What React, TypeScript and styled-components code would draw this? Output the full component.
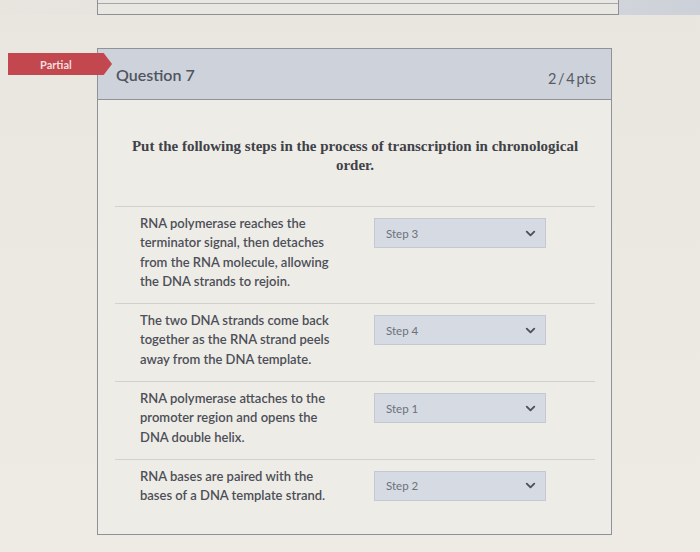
import React from 'react';
import styled, { createGlobalStyle } from 'styled-components';
import { ChevronDown } from 'lucide-react';

const GlobalStyle = createGlobalStyle`
    body {
        margin: 0;
        background-color: #ebe8e1;
        font-family: Lato, "Noto Sans", sans-serif;
    }
`;

const Page = styled.div`
    width: 700px;
    height: 552px;
    overflow: hidden;
    display: flex;
    flex-direction: column;
    background: linear-gradient(180deg, #e9e6e0 0%, #eeebe4 100%);
`;

const TopBand = styled.div`
    display: flex;
    height: 15px;
    background: linear-gradient(90deg, #e8e5df 0%, #e3e2e0 45%, #ccd0d8 100%);
`;

const PrevCard = styled.div`
    margin-left: 97px;
    width: 520px;
    border: 1px solid #8e9096;
    border-top: none;
    background-color: #e9e7e2;
    display: flex;
    flex-direction: column;
`;

const PrevFooter = styled.div`
    height: 3px;
    border-bottom: 1px solid #a4a6ab;
`;

const QuestionArea = styled.div`
    margin-top: 33px;
    margin-left: 97px;
    width: 515px;
    position: relative;
`;

const Badge = styled.div`
    position: absolute;
    left: -89px;
    top: 5px;
    width: 104px;
    height: 22px;
    background-color: #c2474e;
    clip-path: polygon(0 0, 92% 0, 100% 50%, 92% 100%, 0 100%);
    color: #f4dede;
    font-size: 11px;
    font-weight: 700;
    display: flex;
    align-items: center;
    padding-left: 32px;
    box-sizing: border-box;
    z-index: 2;
`;

const Card = styled.div`
    border: 1px solid #8f9297;
    background-color: #eeece7;
`;

const Header = styled.div`
    height: 50px;
    background-color: #cdd2db;
    border-bottom: 1px solid #8f9297;
    display: flex;
    align-items: center;
    justify-content: space-between;
    padding: 0 15px 0 18px;
`;

const Title = styled.div`
    font-size: 16px;
    color: #505560;
    font-weight: 600;
`;

const Points = styled.div`
    font-size: 14.5px;
    color: #555a64;
    margin-top: 8px;
    word-spacing: -2px;
`;

const Body = styled.div`
    padding: 37px 16px 0 17px;
`;

const Prompt = styled.div`
    font-family: "Liberation Serif", serif;
    font-weight: 700;
    font-size: 15px;
    line-height: 19px;
    color: #404248;
    text-align: center;
    padding: 0 14px;
    margin-bottom: 31px;
`;

const Row = styled.div`
    display: flex;
    align-items: flex-start;
    box-sizing: border-box;
    min-height: 75px;
    border-top: 1px solid #d3d1cc;
    padding: 7px 0 12px 25px;
`;

const Statement = styled.div`
    width: 192px;
    font-size: 13px;
    line-height: 19.3px;
    font-weight: 600;
    color: #4c4f57;
`;

const Select = styled.div`
    margin-left: 42px;
    margin-top: 4px;
    width: 172px;
    height: 30px;
    box-sizing: border-box;
    background-color: #d6dae2;
    border: 1px solid #c3c8d1;
    display: flex;
    align-items: center;
    justify-content: space-between;
    padding: 0 7px 0 11px;
    font-size: 11.5px;
    color: #6c717b;
    svg {
        color: #4d5159;
    }
`;

interface Match {
    text: string;
    step: string;
}

const matches: Match[] = [
    {
        text: 'RNA polymerase reaches the terminator signal, then detaches from the RNA molecule, allowing the DNA strands to rejoin.',
        step: 'Step 3',
    },
    {
        text: 'The two DNA strands come back together as the RNA strand peels away from the DNA template.',
        step: 'Step 4',
    },
    {
        text: 'RNA polymerase attaches to the promoter region and opens the DNA double helix.',
        step: 'Step 1',
    },
    {
        text: 'RNA bases are paired with the bases of a DNA template strand.',
        step: 'Step 2',
    },
];

function App() {
    return (
        <Page>
            <GlobalStyle />
            <TopBand>
                <PrevCard>
                    <PrevFooter />
                </PrevCard>
            </TopBand>
            <QuestionArea>
                <Badge>Partial</Badge>
                <Card>
                    <Header>
                        <Title>Question 7</Title>
                        <Points>2 / 4 pts</Points>
                    </Header>
                    <Body>
                        <Prompt>
                            Put the following steps in the process of transcription in chronological order.
                        </Prompt>
                        {matches.map(m => (
                            <Row key={m.step}>
                                <Statement>{m.text}</Statement>
                                <Select>
                                    <span>{m.step}</span>
                                    <ChevronDown size={15} strokeWidth={3} />
                                </Select>
                            </Row>
                        ))}
                    </Body>
                </Card>
            </QuestionArea>
        </Page>
    );
}

export default App;
